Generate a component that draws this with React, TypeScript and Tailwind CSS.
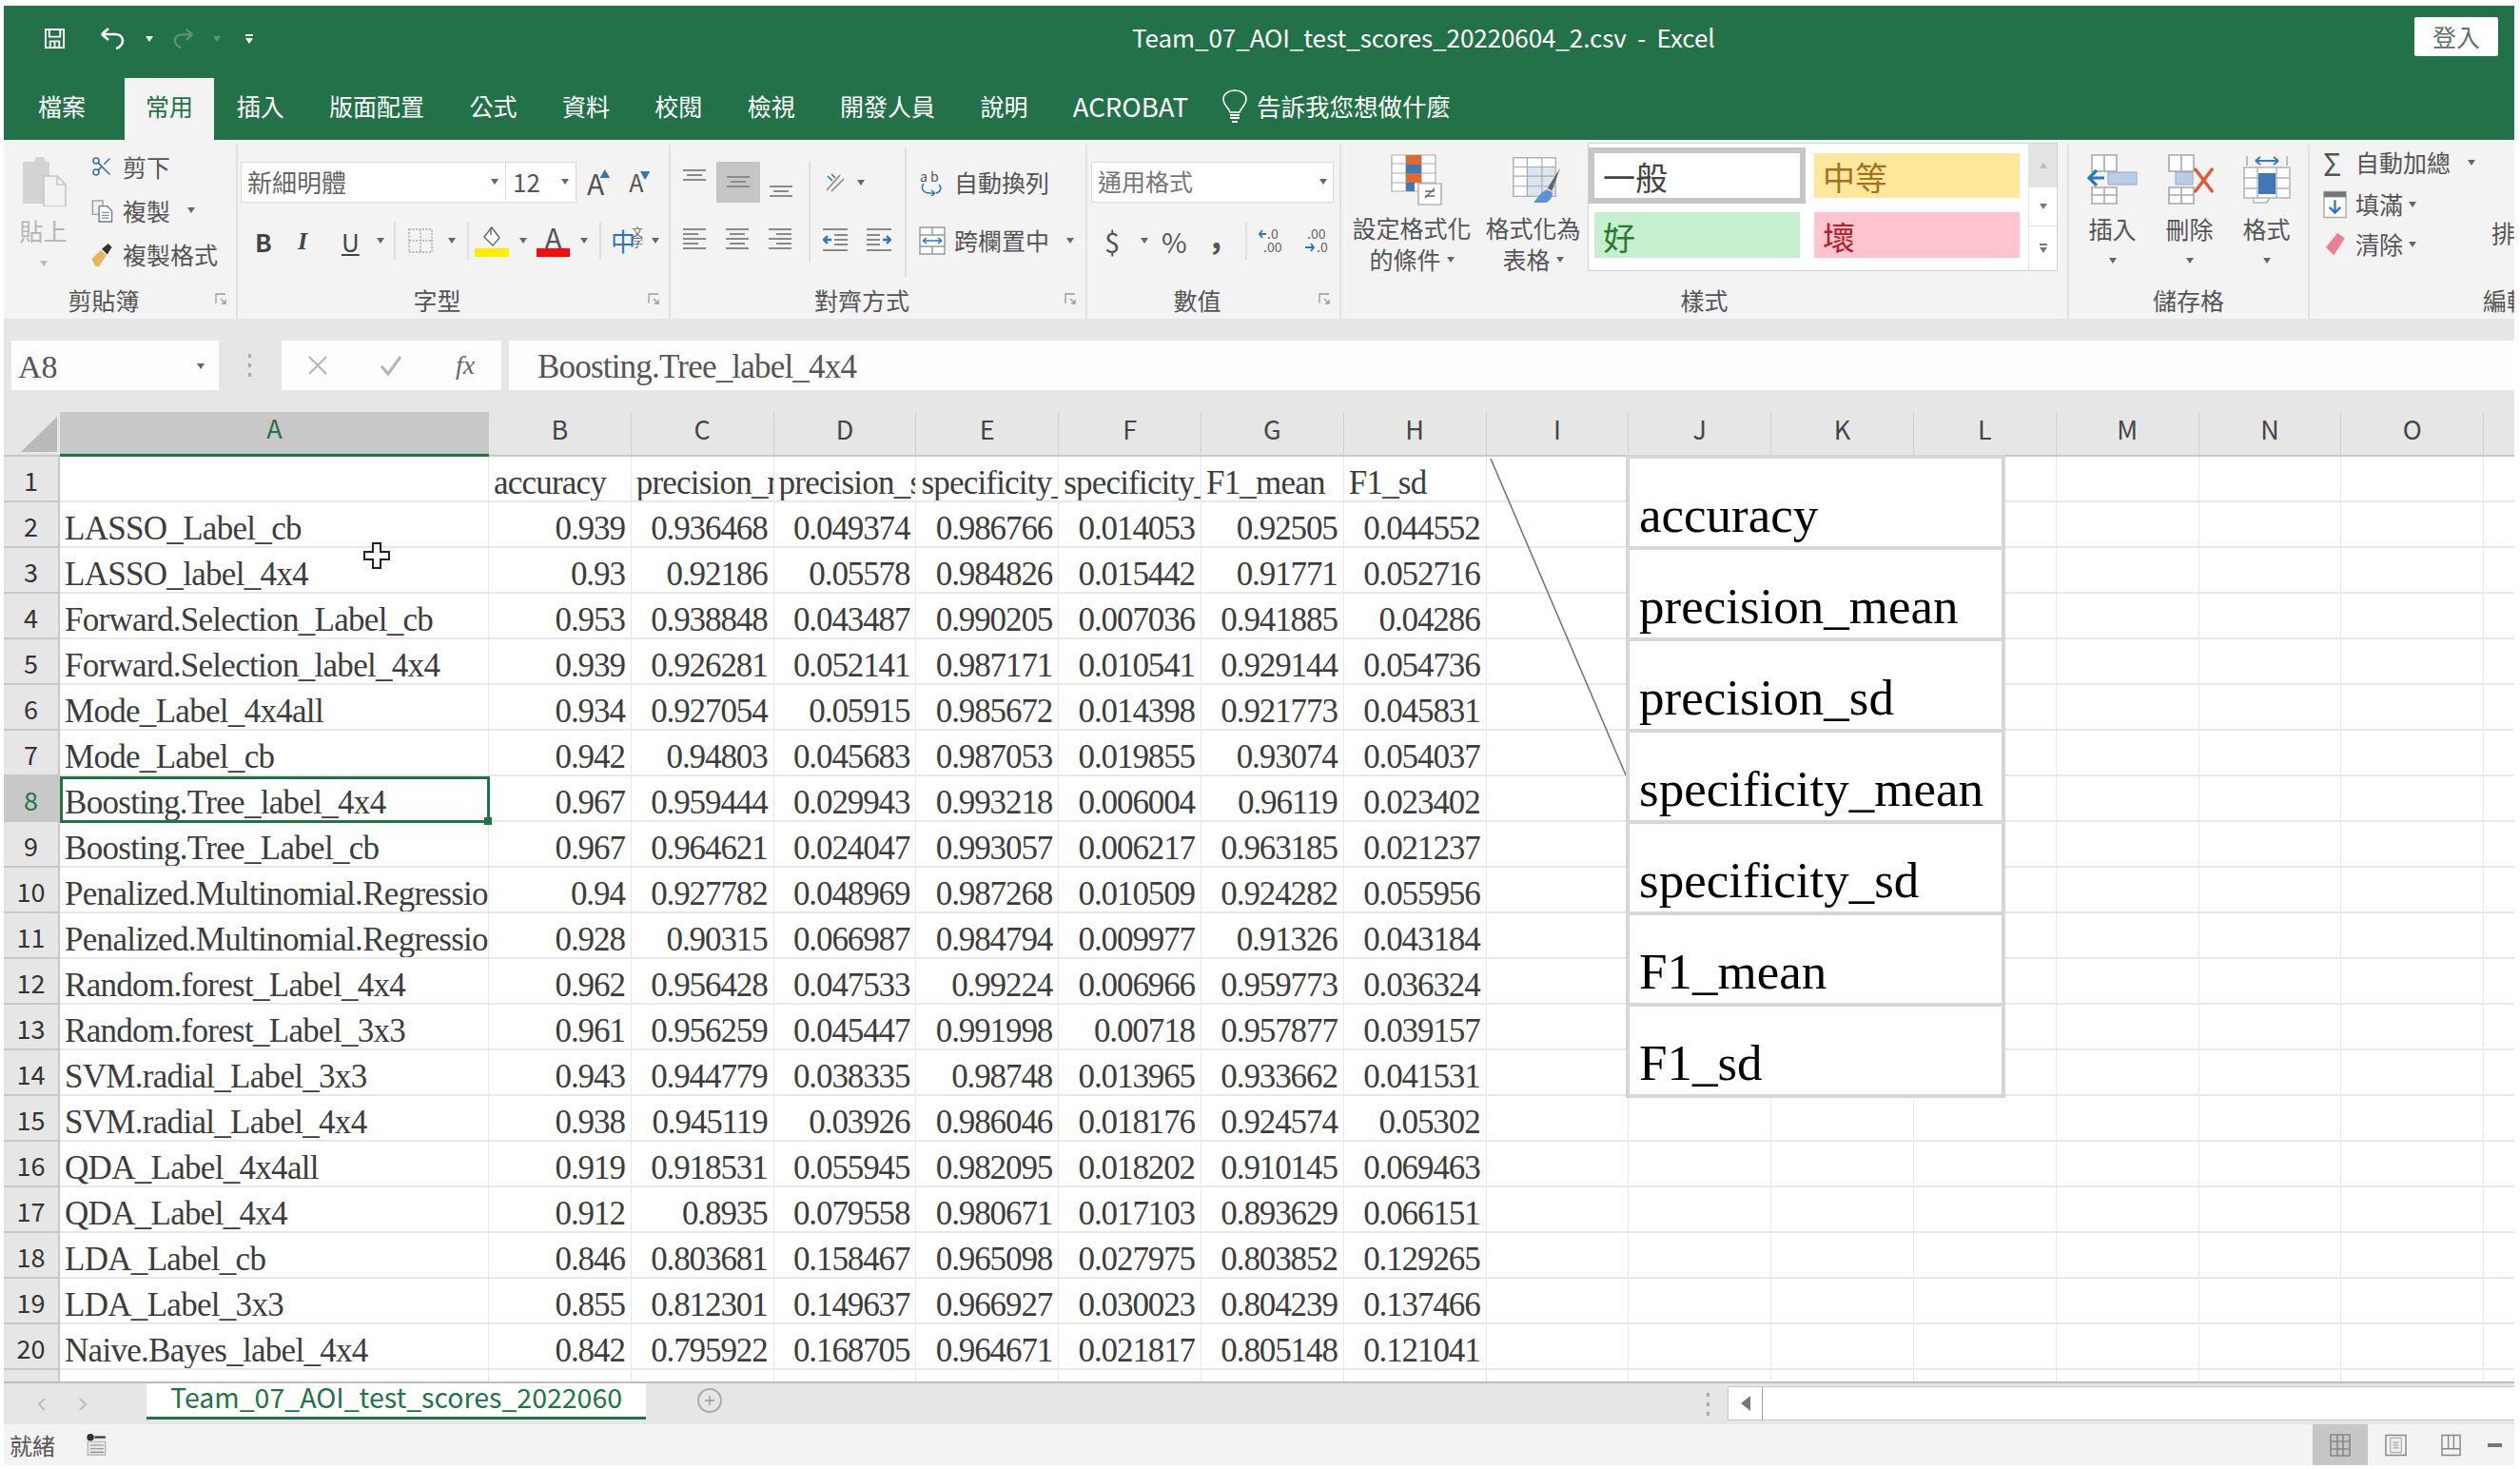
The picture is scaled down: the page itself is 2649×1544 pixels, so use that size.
import type { ReactNode } from 'react';
import { Scissors } from 'lucide-react';

const columns = ['B', 'C', 'D', 'E', 'F', 'G', 'H', 'I', 'J', 'K', 'L', 'M', 'N', 'O', 'P'];

const headers = ['accuracy', 'precision_mean', 'precision_sd', 'specificity_mean', 'specificity_sd', 'F1_mean', 'F1_sd'];

const rows: string[][] = [
  ['LASSO_Label_cb', '0.939', '0.936468', '0.049374', '0.986766', '0.014053', '0.92505', '0.044552'],
  ['LASSO_label_4x4', '0.93', '0.92186', '0.05578', '0.984826', '0.015442', '0.91771', '0.052716'],
  ['Forward.Selection_Label_cb', '0.953', '0.938848', '0.043487', '0.990205', '0.007036', '0.941885', '0.04286'],
  ['Forward.Selection_label_4x4', '0.939', '0.926281', '0.052141', '0.987171', '0.010541', '0.929144', '0.054736'],
  ['Mode_Label_4x4all', '0.934', '0.927054', '0.05915', '0.985672', '0.014398', '0.921773', '0.045831'],
  ['Mode_Label_cb', '0.942', '0.94803', '0.045683', '0.987053', '0.019855', '0.93074', '0.054037'],
  ['Boosting.Tree_label_4x4', '0.967', '0.959444', '0.029943', '0.993218', '0.006004', '0.96119', '0.023402'],
  ['Boosting.Tree_Label_cb', '0.967', '0.964621', '0.024047', '0.993057', '0.006217', '0.963185', '0.021237'],
  ['Penalized.Multinomial.Regressio', '0.94', '0.927782', '0.048969', '0.987268', '0.010509', '0.924282', '0.055956'],
  ['Penalized.Multinomial.Regressio', '0.928', '0.90315', '0.066987', '0.984794', '0.009977', '0.91326', '0.043184'],
  ['Random.forest_Label_4x4', '0.962', '0.956428', '0.047533', '0.99224', '0.006966', '0.959773', '0.036324'],
  ['Random.forest_Label_3x3', '0.961', '0.956259', '0.045447', '0.991998', '0.00718', '0.957877', '0.039157'],
  ['SVM.radial_Label_3x3', '0.943', '0.944779', '0.038335', '0.98748', '0.013965', '0.933662', '0.041531'],
  ['SVM.radial_Label_4x4', '0.938', '0.945119', '0.03926', '0.986046', '0.018176', '0.924574', '0.05302'],
  ['QDA_Label_4x4all', '0.919', '0.918531', '0.055945', '0.982095', '0.018202', '0.910145', '0.069463'],
  ['QDA_Label_4x4', '0.912', '0.8935', '0.079558', '0.980671', '0.017103', '0.893629', '0.066151'],
  ['LDA_Label_cb', '0.846', '0.803681', '0.158467', '0.965098', '0.027975', '0.803852', '0.129265'],
  ['LDA_Label_3x3', '0.855', '0.812301', '0.149637', '0.966927', '0.030023', '0.804239', '0.137466'],
  ['Naive.Bayes_label_4x4', '0.842', '0.795922', '0.168705', '0.964671', '0.021817', '0.805148', '0.121041'],
];

const tabs = ['插入', '版面配置', '公式', '資料', '校閱', '檢視', '開發人員', '說明'];

function Caret({ className = '' }: { className?: string }) {
  return (
    <svg viewBox="0 0 8 6" className={`h-[6px] w-[8px] shrink-0 ${className}`}>
      <path d="M0 0h8L4 6z" fill="currentColor" />
    </svg>
  );
}

// horizontal text-alignment glyph: align is where the short lines sit
function Lines({ align, count = 5, className = '' }: { align: 'left' | 'center' | 'right' | 'full'; count?: number; className?: string }) {
  const ys = Array.from({ length: count }, (_, i) => 1 + i * 5);
  return (
    <svg viewBox={`0 0 24 ${count * 5}`} className={`w-[24px] shrink-0 ${className}`} style={{ height: count * 5 }}>
      {ys.map((y, i) => {
        const short = i % 2 === 1 ? 16 : 24;
        const x = align === 'center' ? (24 - short) / 2 : align === 'right' ? 24 - short : 0;
        return <rect key={y} x={align === 'full' ? 0 : x} y={y} width={align === 'full' ? 24 : short} height="2" fill="#8a8a8a" />;
      })}
    </svg>
  );
}

function Launcher() {
  return (
    <svg viewBox="0 0 12 12" className="absolute right-[10px] top-[11px] h-[12px] w-[12px]">
      <path d="M1 11V1h10M6 6l5 5M11 7v4H7" fill="none" stroke="#9a9a9a" strokeWidth="1.3" />
    </svg>
  );
}

function Group({ className, label, launcher, children }: { className: string; label?: string; launcher?: boolean; children: ReactNode }) {
  return (
    <section className={`flex shrink-0 flex-col border-r-2 border-[#e2e2e2] ${className}`}>
      <div className="h-[145px]">{children}</div>
      <div className={`relative h-[33px] pt-[3px] text-center text-[25px] leading-[30px] text-[#555] ${launcher ? 'pr-[34px]' : ''}`}>
        {label}
        {launcher && <Launcher />}
      </div>
    </section>
  );
}

function Sep({ className = '' }: { className?: string }) {
  return <div className={`w-[2px] shrink-0 bg-[#e0e0e0] ${className}`} />;
}

function CellsIcon({ kind }: { kind: 'insert' | 'delete' | 'format' }) {
  if (kind === 'format') {
    return (
      <svg viewBox="0 0 52 54" className="h-[54px] w-[52px]">
        <path d="M14 8h24M14 8l5-4M14 8l5 4M38 8l-5-4M38 8l-5 4" fill="none" stroke="#3d7ab8" strokeWidth="2" />
        <path d="M5 3v10M47 3v10" stroke="#aaa" strokeWidth="1.5" />
        <path d="M2 15h48v32H2zM2 26h48M2 37h48M16 15v32M36 15v32M12 47v5h14l3-5" fill="#fff" stroke="#b4b4b4" strokeWidth="1.5" />
        <rect x="17" y="21" width="18" height="22" fill="#3f78b5" />
      </svg>
    );
  }
  const del = kind === 'delete';
  return (
    <svg viewBox="0 0 54 54" className="h-[54px] w-[54px]">
      <path d="M5 2h26v17H5zM18 2v17M5 36h26v17H5zM18 36v17M5 44h26" fill="#fff" stroke="#a8a8a8" strokeWidth="1.6" />
      <rect x={del ? 12 : 22} y="20" width={del ? 18 : 30} height="13" fill="#b9cde6" stroke="#90a8c8" />
      {del ? (
        <path d="M32 16l19 25M51 16L32 41" stroke="#dc5b3a" strokeWidth="3.4" />
      ) : (
        <path d="M18 26H3M10 18l-8 8 8 8" fill="none" stroke="#2f75bb" strokeWidth="3.2" />
      )}
    </svg>
  );
}

function Ribbon() {
  return (
    <div className="flex h-[188px] overflow-hidden bg-[#f3f3f4] pt-[5px]">
      <Group className="w-[246px]" label="剪貼簿" launcher>
        <div className="flex h-full pl-[16px]">
          <div className="flex w-[75px] flex-col items-center pr-[24px] pt-[11px] text-[#b5b5b5]">
            <svg viewBox="0 0 48 54" className="h-[54px] w-[48px]">
              <path d="M2 7h12l2-5h8l2 5h4v44H2z" fill="#d3d3d3" />
              <path d="M24 22h14l9 9v23H24z" fill="#f3f3f3" stroke="#c5c5c5" strokeWidth="1.6" />
              <path d="M38 22v9h9" fill="none" stroke="#c5c5c5" strokeWidth="1.6" />
            </svg>
            <span className="mt-[11px] whitespace-nowrap text-[25px] leading-[28px]">貼上</span>
            <Caret className="mt-[18px] text-[#bbb]" />
          </div>
          <div className="flex flex-col text-[25px] leading-[44px] text-[#555]">
            <div className="flex h-[46px] items-center">
              <Scissors className="h-[24px] w-[24px] -scale-y-100 text-[#3f6f9f]" strokeWidth={1.6} />
              <span className="ml-[10px]">剪下</span>
            </div>
            <div className="flex h-[46px] items-center">
              <svg viewBox="0 0 24 26" className="h-[25px] w-[24px]">
                <path d="M2 2h11v15H2z" fill="#eee" stroke="#999" strokeWidth="1.4" />
                <path d="M9 8h9l5 5v12H9z" fill="#fff" stroke="#777" strokeWidth="1.4" />
                <path d="M12 15h8M12 18h8M12 21h8" stroke="#6f95bb" strokeWidth="1.2" />
              </svg>
              <span className="ml-[10px]">複製</span>
              <Caret className="ml-[18px] text-[#666]" />
            </div>
            <div className="flex h-[46px] items-center">
              <svg viewBox="0 0 24 26" className="h-[25px] w-[24px]">
                <path d="M1 18L11 8l6 6-8 12H5z" fill="#e9b55c" />
                <path d="M12 7l7-6 4 4-5 8z" fill="#333" />
              </svg>
              <span className="ml-[10px]">複製格式</span>
            </div>
          </div>
        </div>
      </Group>

      <Group className="w-[455px]" label="字型" launcher>
        <div className="pl-[3px] pt-[18px] text-[#555]">
          <div className="flex h-[43px] items-center">
            <div className="flex h-full w-[353px] border border-[#d9d9d9] bg-white pb-[2px] text-[26px]">
              <div className="flex w-[278px] items-center justify-between border-r border-[#d9d9d9] pl-[6px] pr-[7px] text-[#666]">
                新細明體
                <Caret className="text-[#666]" />
              </div>
              <div className="flex flex-1 items-center justify-between pl-[7px] pr-[7px]">
                12
                <Caret className="text-[#666]" />
              </div>
            </div>
            <div className="relative ml-[11px] text-[30px] leading-none">
              A<span className="absolute -right-[6px] top-0 text-[11px] text-[#2f75bb]">▲</span>
            </div>
            <div className="relative ml-[26px] text-[25px] leading-none">
              A<span className="absolute -right-[7px] top-0 text-[11px] text-[#2f75bb]">▼</span>
            </div>
          </div>
          <div className="mt-[22px] flex h-[36px] items-center pl-[15px] text-[26px] text-[#444]">
            <span className="w-[16px] font-bold">B</span>
            <span className="ml-[29px] w-[14px] font-['Liberation_Serif',serif] font-bold italic">I</span>
            <span className="ml-[32px] w-[17px] underline">U</span>
            <Caret className="ml-[20px] text-[#666]" />
            <Sep className="ml-[10px] h-[40px]" />
            <svg viewBox="0 0 26 26" className="ml-[13px] h-[26px] w-[26px]">
              <path d="M1 1h24v24H1zM13 1v24M1 13h24" fill="none" stroke="#a8a8a8" strokeWidth="1.4" strokeDasharray="2 1.5" />
            </svg>
            <Caret className="ml-[16px] text-[#666]" />
            <Sep className="ml-[12px] h-[40px]" />
            <div className="ml-[6px] flex w-[36px] flex-col items-center">
              <svg viewBox="0 0 24 24" className="h-[24px] w-[24px]">
                <path d="M12 2l8 11-7 8-9-9z" fill="#fff" stroke="#666" strokeWidth="1.4" />
                <path d="M11 2v8" stroke="#666" strokeWidth="1.4" />
              </svg>
              <div className="h-[9px] w-[36px] bg-[#ffee00]" />
            </div>
            <Caret className="ml-[11px] text-[#666]" />
            <div className="ml-[10px] flex w-[35px] flex-col items-center text-[30px] leading-[24px] text-[#555]">
              A
              <div className="h-[9px] w-[35px] bg-[#f20d0d]" />
            </div>
            <Caret className="ml-[11px] text-[#666]" />
            <Sep className="ml-[12px] h-[40px]" />
            <span className="relative ml-[10px] w-[30px] text-[26px] leading-none text-[#2f75bb]">
              中
              <span className="absolute right-[-4px] top-[-2px] text-[12px] leading-[11px] text-[#666]">文<br />字</span>
            </span>
            <Caret className="ml-[13px] text-[#666]" />
          </div>
        </div>
      </Group>

      <Group className="w-[438px]" label="對齊方式" launcher>
        <div className="flex h-full pl-[13px] pt-[18px]">
          <div className="flex flex-col">
            <div className="flex h-[43px] w-[132px]">
              <Lines align="center" count={3} className="mt-[7px]" />
              <div className="ml-[11px] flex h-[43px] w-[46px] items-center justify-center bg-[#c6c6c6]">
                <Lines align="center" count={3} />
              </div>
              <Lines align="center" count={3} className="ml-[10px] mt-[24px]" />
            </div>
            <div className="mt-[26px] flex w-[132px]">
              <Lines align="left" />
              <Lines align="center" className="ml-[21px]" />
              <Lines align="right" className="ml-[21px]" />
            </div>
          </div>
          <Sep className="h-[106px]" />
          <div className="flex w-[99px] flex-col pl-[13px]">
            <div className="flex h-[43px] items-center text-[#666]">
              <svg viewBox="0 0 24 24" className="h-[24px] w-[24px]">
                <path d="M4 20L18 4M9 21L22 8" stroke="#888" strokeWidth="1.6" />
                <path d="M5 5l5 5M9 3l4 4" stroke="#2f75bb" strokeWidth="1.6" />
              </svg>
              <Caret className="ml-[12px]" />
            </div>
            <div className="mt-[26px] flex gap-[20px]">
              <svg viewBox="0 0 26 26" className="h-[26px] w-[26px]">
                <path d="M0 2h26M12 8h14M12 13h14M12 18h14M0 24h26" stroke="#8a8a8a" strokeWidth="2" />
                <path d="M9 13H1M5 9l-4 4 4 4" fill="none" stroke="#2f75bb" strokeWidth="2.4" />
              </svg>
              <svg viewBox="0 0 26 26" className="h-[26px] w-[26px]">
                <path d="M0 2h26M0 8h14M0 13h14M0 18h14M0 24h26" stroke="#8a8a8a" strokeWidth="2" />
                <path d="M17 13h8M21 9l4 4-4 4" fill="none" stroke="#2f75bb" strokeWidth="2.4" />
              </svg>
            </div>
          </div>
          <Sep className="-mt-[14px] h-[135px]" />
          <div className="flex flex-col pl-[13px] text-[25px] text-[#555]">
            <div className="flex h-[43px] items-center">
              <svg viewBox="0 0 26 28" className="h-[28px] w-[26px]">
                <text x="1" y="13" fontSize="14" fill="#555">a</text>
                <text x="12" y="13" fontSize="14" fill="#555">b</text>
                <path d="M5 15c-4 5 0 10 6 10h6M17 25l-4-3M17 25l-4 3M21 16c3 3 2 8-3 9" fill="none" stroke="#2f75bb" strokeWidth="1.5" />
              </svg>
              <span className="ml-[11px]">自動換列</span>
            </div>
            <div className="mt-[22px] flex h-[36px] items-center">
              <svg viewBox="0 0 28 30" className="h-[30px] w-[28px]">
                <path d="M1 1h26v28H1zM1 9h26M1 21h26M14 1v8M14 21v8" fill="#fff" stroke="#999" strokeWidth="1.5" />
                <path d="M4 15h20M4 15l4-3M4 15l4 3M24 15l-4-3M24 15l-4 3" fill="none" stroke="#2f75bb" strokeWidth="1.5" />
              </svg>
              <span className="ml-[9px]">跨欄置中</span>
              <Caret className="ml-[18px] text-[#666]" />
            </div>
          </div>
        </div>
      </Group>

      <Group className="w-[267px]" label="數值" launcher>
        <div className="pl-[4px] pt-[18px] text-[#555]">
          <div className="flex h-[43px] w-[255px] items-center justify-between border border-[#d9d9d9] bg-white pb-[2px] pl-[6px] pr-[6px] text-[25px] text-[#777]">
            通用格式
            <Caret className="text-[#666]" />
          </div>
          <div className="mt-[22px] flex h-[36px] items-center pl-[14px] text-[29px] leading-none">
            <span className="w-[17px]">$</span>
            <Caret className="ml-[21px] text-[#666]" />
            <span className="ml-[14px] w-[24px]">%</span>
            <span className="mb-[12px] ml-[28px] w-[12px] text-[34px] font-bold">,</span>
            <Sep className="ml-[24px] h-[40px]" />
            <svg viewBox="0 0 26 28" className="ml-[12px] h-[28px] w-[26px]">
              <text x="9" y="12" fontSize="14" fill="#666">.0</text>
              <text x="5" y="26" fontSize="14" fill="#666">.00</text>
              <path d="M8 7H1M4 3L1 7l3 4" fill="none" stroke="#2f75bb" strokeWidth="1.8" />
            </svg>
            <svg viewBox="0 0 26 28" className="ml-[22px] h-[28px] w-[26px]">
              <text x="3" y="12" fontSize="14" fill="#666">.00</text>
              <text x="13" y="26" fontSize="14" fill="#666">.0</text>
              <path d="M1 21h9M7 17l3 4-3 4" fill="none" stroke="#2f75bb" strokeWidth="1.8" />
            </svg>
          </div>
        </div>
      </Group>

      <Group className="w-[765px]" label="樣式">
        <div className="flex h-full pl-[9px] text-[25px] leading-[33px] text-[#555]">
          <div className="flex w-[130px] flex-col items-center pt-[10px]">
            <svg viewBox="0 0 54 54" className="ml-[9px] h-[54px] w-[54px]">
              <path d="M1 1h46v38H1zM1 10h46M1 20h46M1 30h46M16 1v38M32 1v38" fill="#fff" stroke="#aaa" strokeWidth="1.2" />
              <rect x="16" y="1" width="16" height="10" fill="#de6a33" />
              <rect x="16" y="11" width="16" height="9" fill="#3f78b5" />
              <rect x="16" y="20" width="16" height="10" fill="#de6a33" />
              <rect x="16" y="30" width="9" height="9" fill="#3f78b5" />
              <path d="M29 31h24v22H29z" fill="#fff" stroke="#999" strokeWidth="1.2" />
              <path d="M36 46l10-10M36 39h10M36 44h10" stroke="#666" strokeWidth="1.3" />
            </svg>
            <span className="mt-[7px] whitespace-nowrap">設定格式化</span>
            <span className="flex items-center whitespace-nowrap">的條件<Caret className="ml-[6px] text-[#666]" /></span>
          </div>
          <div className="ml-[12px] flex w-[101px] flex-col items-center pt-[10px]">
            <svg viewBox="0 0 56 54" className="ml-[11px] h-[54px] w-[54px]">
              <path d="M1 3h46v42H1z" fill="#dbe4f1" stroke="#aaa" strokeWidth="1.2" />
              <path d="M1 3h46v10H1zM1 13h15v32H1z" fill="#fff" stroke="#aaa" strokeWidth="1.2" />
              <path d="M1 23h46M1 34h46M16 3v42M32 3v42" stroke="#aaa" strokeWidth="1.2" />
              <path d="M52 14L38 36l5 3z" fill="#666" />
              <path d="M37 38c-6 2-10 9-14 14h14c5-3 7-8 6-12z" fill="#5b94d2" />
            </svg>
            <span className="mt-[7px] whitespace-nowrap">格式化為</span>
            <span className="flex items-center whitespace-nowrap">表格<Caret className="ml-[6px] text-[#666]" /></span>
          </div>
          <div className="ml-[7px] mt-[-2px] flex h-[135px] w-[494px] shrink-0 border border-[#d2d2d2] bg-white">
            <div className="grid w-[464px] grid-cols-[216px_216px] grid-rows-[47px_48px] gap-x-[15px] gap-y-[15px] pl-[6px] pt-[10px] text-[34px] leading-none">
              <div className="flex items-center bg-white pl-[9px] pt-[3px] text-[#444] outline-[6px] outline-[#c6c6c6]">一般</div>
              <div className="flex items-center bg-[#ffe89c] pl-[9px] pt-[3px] text-[#a8701c]">中等</div>
              <div className="flex items-center bg-[#c6efce] pl-[9px] pt-[3px] text-[#2a7a34]">好</div>
              <div className="flex items-center bg-[#ffc4ce] pl-[9px] pt-[3px] text-[#b3202c]">壞</div>
            </div>
            <div className="flex w-[30px] flex-col border-l border-[#e4e4e4] text-[#777]">
              <div className="flex h-[46px] items-center justify-center bg-[#e4e4e4]"><Caret className="rotate-180 text-[#bbb]" /></div>
              <div className="flex h-[41px] items-center justify-center border-b border-[#e4e4e4]"><Caret /></div>
              <div className="flex flex-1 flex-col items-center justify-center gap-[2px]"><div className="h-[2px] w-[8px] bg-[#777]" /><Caret /></div>
            </div>
          </div>
        </div>
      </Group>

      <Group className="w-[253px]" label="儲存格">
        <div className="flex h-full pl-[5px] pt-[9px] text-center text-[25px] leading-[33px] text-[#555]">
          {[
            ['insert', '插入'],
            ['delete', '刪除'],
            ['format', '格式'],
          ].map(([kind, name]) => (
            <div key={kind} className="flex w-[81px] flex-col items-center">
              <CellsIcon kind={kind as 'insert' | 'delete' | 'format'} />
              <span className="mt-[9px]">{name}</span>
              <Caret className="mt-[14px] text-[#666]" />
            </div>
          ))}
        </div>
      </Group>

      <section className="flex w-[215px] shrink-0 flex-col">
        <div className="relative h-[145px] pl-[14px] text-[25px] text-[#555]">
          <div className="flex h-[38px] items-center">
            <span className="w-[22px] text-[32px] leading-none">Σ</span>
            <span className="ml-[12px]">自動加總</span>
            <Caret className="ml-[18px] text-[#666]" />
          </div>
          <div className="mt-[5px] flex h-[40px] items-center">
            <svg viewBox="0 0 26 30" className="h-[30px] w-[25px]">
              <path d="M1 1h24v28H1z" fill="#fff" stroke="#aaa" strokeWidth="1.5" />
              <rect x="1" y="1" width="24" height="6" fill="#777" />
              <path d="M13 10v14M7 18l6 6 6-6" fill="none" stroke="#2f75bb" strokeWidth="2.4" />
            </svg>
            <span className="ml-[9px]">填滿</span>
            <Caret className="ml-[6px] text-[#666]" />
          </div>
          <div className="mt-[2px] flex h-[40px] items-center">
            <svg viewBox="0 0 26 30" className="h-[28px] w-[25px]">
              <path d="M2 19L16 2l8 6-13 20z" fill="#ec7f94" />
              <path d="M2 19l9 9" stroke="#fff" strokeWidth="2" />
            </svg>
            <span className="ml-[9px]">清除</span>
            <Caret className="ml-[6px] text-[#666]" />
          </div>
          <span className="absolute left-[191px] top-[74px]">排</span>
        </div>
        <div className="h-[33px] whitespace-nowrap pl-[182px] pt-[3px] text-[25px] leading-[30px] text-[#555]">編輯</div>
      </section>
    </div>
  );
}

function FormulaBar() {
  return (
    <div className="flex h-[98px] items-start bg-[#e6e6e7] pt-[23px]">
      <div className="ml-[8px] flex h-[52px] w-[218px] items-center justify-between bg-[#fdfdfd] pl-[7px] pr-[15px] pt-[2px] font-['Liberation_Serif',serif] text-[34px] text-[#555]">
        A8
        <Caret className="text-[#666]" />
      </div>
      <div className="ml-[31px] mt-[14px] flex h-[24px] w-[3px] flex-col justify-between">
        <div className="h-[4px] bg-[#aaa]" />
        <div className="h-[4px] bg-[#aaa]" />
        <div className="h-[4px] bg-[#aaa]" />
      </div>
      <div className="ml-[32px] flex h-[52px] w-[231px] items-center bg-[#fdfdfd] pl-[27px] text-[#b5b5b5]">
        <svg viewBox="0 0 22 22" className="h-[22px] w-[22px]"><path d="M2 2l18 18M20 2L2 20" stroke="currentColor" strokeWidth="2" /></svg>
        <svg viewBox="0 0 24 22" className="ml-[54px] h-[22px] w-[24px]"><path d="M2 12l7 8L22 2" fill="none" stroke="currentColor" strokeWidth="3" /></svg>
        <span className="ml-[56px] font-['Liberation_Serif',serif] text-[28px] italic text-[#666]">fx</span>
      </div>
      <div className="ml-[8px] flex h-[52px] flex-1 items-center bg-[#fdfdfd] pl-[30px] pt-[5px] font-['Liberation_Serif',serif] text-[35px] tracking-[-0.8px] text-[#555]">
        Boosting.Tree_label_4x4
      </div>
    </div>
  );
}

function Sheet() {
  const cell = "flex items-end overflow-hidden whitespace-nowrap border-b-2 border-r border-[#e8e8e8] bg-white font-['Liberation_Serif',serif] text-[35px] leading-[36px] text-[#3c3c3c]";
  return (
    <main className="relative h-[1019px] overflow-hidden bg-white">
      <div className="grid grid-cols-[59px_451px_repeat(15,149.8px)] auto-rows-[48px] [grid-template-rows:47px]">
        <div className="relative border-b-2 border-[#c8c8c8] bg-[#e6e6e7]">
          <div className="absolute bottom-[3px] right-[3px] h-0 w-0 border-b-[37px] border-l-[38px] border-b-[#b9b9b9] border-l-transparent" />
        </div>
        <div className="flex items-center justify-center border-b-[3px] border-[#217346] bg-[#c8c8c8] pb-[9px] text-[27px] text-[#217346]">A</div>
        {columns.map((c) => (
          <div key={c} className="flex items-center justify-center border-b-2 border-r border-b-[#c8c8c8] border-r-[#cfcfcf] bg-[#e6e6e7] pb-[9px] text-[27px] text-[#444]">
            {c}
          </div>
        ))}

        {Array.from({ length: 21 }, (_, r) => {
          const isFirst = r === 0;
          const data = rows[r - 1];
          const selected = r === 7;
          return (
            <div key={r} className="contents">
              <div className={`flex items-center justify-center border-b-2 border-r-2 border-[#c8c8c8] pt-[4px] text-[27px] ${selected ? 'bg-[#c8c8c8] text-[#217346]' : 'bg-[#e6e6e7] text-[#333]'}`}>
                {r < 20 ? r + 1 : ''}
              </div>
              <div className={`${cell} pl-[5px] tracking-[-0.7px]`}>{data ? data[0] : ''}</div>
              {columns.map((c, i) => (
                <div key={c} className={`${cell} ${isFirst ? 'pl-[5px] tracking-[-0.8px]' : 'justify-end pr-[6px] tracking-[-1.1px]'}`}>
                  {isFirst ? headers[i] ?? '' : data?.[i + 1] ?? ''}
                </div>
              ))}
            </div>
          );
        })}
      </div>

      {/* selected cell A8 */}
      <div className="absolute left-[59px] top-[383px] h-[49px] w-[452px] border-[3px] border-[#217346]">
        <div className="absolute -bottom-[5px] -right-[5px] h-[8px] w-[8px] bg-[#217346]" />
      </div>

      {/* mouse cursor */}
      <svg viewBox="0 0 28 28" className="absolute left-[378px] top-[137px] h-[28px] w-[28px]">
        <path d="M10 1h8v9h9v8h-9v9h-8v-9H1v-8h9z" fill="#fff" stroke="#222" strokeWidth="2" />
      </svg>

      {/* connector from the data to the text box */}
      <svg viewBox="0 0 150 340" className="absolute left-[1562px] top-[48px] h-[340px] w-[150px]">
        <path d="M1 1l143 335" stroke="#777" strokeWidth="1.6" fill="none" />
      </svg>

      {/* pasted text box */}
      <div className="absolute left-[1705px] top-[45px] flex w-[399px] flex-col border-x-4 border-t-4 border-[#d6d6d6] bg-white font-['Liberation_Serif',serif] text-[53px] leading-[60px] text-black">
        {headers.map((h) => (
          <div key={h} className="flex h-[96px] items-end border-b-4 border-[#d6d6d6] pb-[3px] pl-[10px]">{h}</div>
        ))}
      </div>
    </main>
  );
}

function SheetBar() {
  return (
    <div className="flex h-[45px] border-t-2 border-[#bdbdbd] bg-[#e6e6e7]">
      <div className="flex w-[150px] items-center pl-[36px] text-[18px] text-[#bdbdbd]">
        <svg viewBox="0 0 8 14" className="h-[14px] w-[8px]"><path d="M7 1L1 7l6 6" fill="none" stroke="currentColor" strokeWidth="2" /></svg>
        <svg viewBox="0 0 8 14" className="ml-[35px] h-[14px] w-[8px]"><path d="M1 1l6 6-6 6" fill="none" stroke="currentColor" strokeWidth="2" /></svg>
      </div>
      <div className="flex h-[38px] w-[525px] items-center justify-center border-b-[3px] border-[#217346] bg-white pb-[6px] text-[28.5px] text-[#217346]">
        Team_07_AOI_test_scores_2022060
      </div>
      <div className="ml-[54px] mt-[5px] flex h-[26px] w-[26px] items-center justify-center rounded-full border-2 border-[#aaa] text-[#999]">
        <svg viewBox="0 0 12 12" className="h-[12px] w-[12px]"><path d="M6 1v10M1 6h10" stroke="currentColor" strokeWidth="1.5" /></svg>
      </div>
      <div className="ml-[1035px] mt-[10px] flex h-[24px] w-[3px] flex-col justify-between">
        <div className="h-[4px] bg-[#aaa]" />
        <div className="h-[4px] bg-[#aaa]" />
        <div className="h-[4px] bg-[#aaa]" />
      </div>
      <div className="ml-[19px] mt-[3px] flex h-[36px] flex-1 border-y border-l border-[#c8c8c8] bg-white">
        <div className="flex w-[36px] items-center justify-center border-r border-[#999]">
          <svg viewBox="0 0 10 16" className="h-[16px] w-[10px]"><path d="M10 0v16L0 8z" fill="#777" /></svg>
        </div>
      </div>
    </div>
  );
}

function StatusBar() {
  return (
    <div className="flex h-[43px] items-center bg-[#f3f3f4] pl-[6px] text-[24px] text-[#555]">
      <span>就緒</span>
      <svg viewBox="0 0 24 26" className="ml-[32px] h-[24px] w-[23px]">
        <circle cx="5" cy="4" r="4" fill="#333" />
        <path d="M2 9h20v15H2z" fill="#e8e8e8" stroke="#aaa" strokeWidth="1.2" />
        <path d="M10 3h12v2H10zM5 13h15M5 17h15M5 21h15" stroke="#888" strokeWidth="1.2" />
      </svg>
      <div className="ml-auto flex h-full items-center">
        <div className="flex h-full w-[58px] items-center justify-center bg-[#c6c6c6]">
          <svg viewBox="0 0 22 24" className="h-[24px] w-[22px]">
            <path d="M1 1h20v22H1zM1 8h20M1 16h20M8 1v22M14 1v22" fill="none" stroke="#888" strokeWidth="1.6" />
          </svg>
        </div>
        <svg viewBox="0 0 24 24" className="ml-[18px] h-[24px] w-[23px]">
          <path d="M1 1h22v22H1z" fill="none" stroke="#888" strokeWidth="1.5" />
          <path d="M6 4h12v16H6z" fill="#eee" stroke="#999" />
          <path d="M9 9h6M9 12h6M9 15h6" stroke="#888" />
        </svg>
        <svg viewBox="0 0 22 24" className="ml-[36px] h-[24px] w-[21px]">
          <path d="M1 1h20v22H1zM1 16h20M8 1v15M14 1v15" fill="none" stroke="#888" strokeWidth="1.5" />
        </svg>
        <div className="ml-[28px] mr-[13px] h-[4px] w-[15px] bg-[#777]" />
      </div>
    </div>
  );
}

export default function App() {
  return (
    <div className="h-[1544px] w-[2649px] overflow-hidden bg-white pl-[4px] pr-[6px] pt-[6px] font-['Noto_Sans_CJK_TC','Noto_Sans',sans-serif]">
      <header className="relative h-[141px] bg-[#237148] text-white">
        <div className="flex h-[76px] items-center">
          <div className="flex items-center pl-[42px]">
            <svg viewBox="0 0 24 24" className="mb-[8px] h-[23px] w-[23px]">
              <path d="M2 2h20v20H2z" fill="none" stroke="#fff" strokeWidth="2" />
              <path d="M6 2v8h12V2M7 22v-7h10v7M12 16v6" fill="none" stroke="#fff" strokeWidth="2" />
            </svg>
            <svg viewBox="0 0 28 24" className="mb-[8px] ml-[36px] h-[24px] w-[28px]">
              <path d="M2 8h14c6 0 8 4 8 7s-3 7-7 8M2 8l7-6M2 8l7 6" fill="none" stroke="#fff" strokeWidth="2.6" />
            </svg>
            <Caret className="mb-[6px] ml-[20px] h-[5px] text-white" />
            <svg viewBox="0 0 24 24" className="mb-[8px] ml-[21px] h-[24px] w-[22px] opacity-25">
              <path d="M22 8H10C4 8 2 12 2 15s3 7 7 8M22 8l-7-6M22 8l-7 6" fill="none" stroke="#fff" strokeWidth="2.4" />
            </svg>
            <Caret className="mb-[6px] ml-[20px] h-[5px] text-white opacity-25" />
            <div className="mb-[6px] ml-[26px] flex flex-col gap-[2px]">
              <div className="h-[2px] w-[8px] bg-white" />
              <Caret className="h-[5px] text-white" />
            </div>
          </div>
          <h1 className="absolute left-[1186px] top-[13px] whitespace-pre text-[26px] font-normal leading-[40px] tracking-[-0.08px]">Team_07_AOI_test_scores_20220604_2.csv  -  Excel</h1>
          <button className="absolute left-[2534px] top-[12px] h-[41px] w-[88px] rounded-[2px] bg-white text-[25px] text-[#5d6f66]">登入</button>
        </div>
        <nav className="flex h-[65px] items-stretch pl-[12px] text-[25px]">
          <div className="flex h-[59px] items-center px-6">檔案</div>
          <div className="ml-[17px] flex h-[65px] w-[94px] items-center justify-center bg-[#f3f3f4] pb-[6px] text-[#237148]">常用</div>
          <div className="flex h-[59px]">
            {tabs.map((t) => (
              <div key={t} className="flex items-center px-[23.7px]">{t}</div>
            ))}
            <div className="flex items-center px-[23.7px] text-[27.5px]">ACROBAT</div>
          </div>
          <div className="ml-[12px] flex h-[59px] items-center">
            <svg viewBox="0 0 26 36" className="h-[36px] w-[26px]">
              <path d="M8 24c-1-5-7-7-7-14C1 5 6 1 13 1s12 4 12 9c0 7-6 9-7 14z" fill="none" stroke="#fff" strokeWidth="1.6" />
              <path d="M8 27h10M8 30h10M10 34h6" stroke="#fff" strokeWidth="2" />
            </svg>
            <span className="ml-[10px] text-[25.5px]">告訴我您想做什麼</span>
          </div>
        </nav>
      </header>
      <Ribbon />
      <FormulaBar />
      <Sheet />
      <SheetBar />
      <StatusBar />
    </div>
  );
}
